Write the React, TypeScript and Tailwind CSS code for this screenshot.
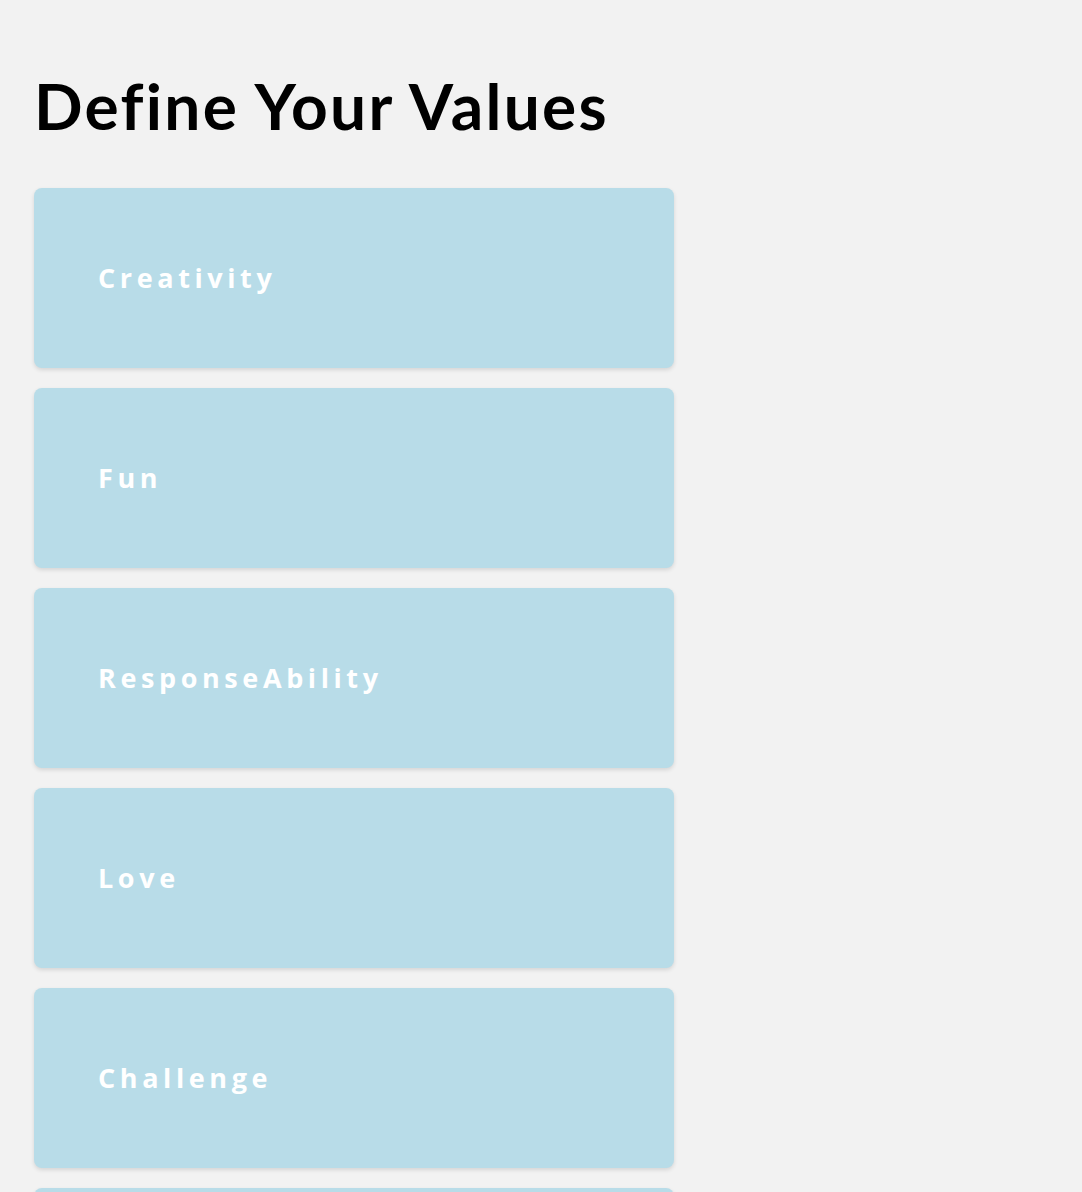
import React from 'react';

const values = ['Creativity', 'Fun', 'ResponseAbility', 'Love', 'Challenge', 'Growth'];

export default function App() {
  return (
    <div className="min-h-screen bg-[#f2f2f2] px-[34px] pt-[62px] font-['Lato','Open_Sans',sans-serif]">
      <h1 className="text-[64px] font-bold leading-[88px] text-black tracking-[2.3px]">Define Your Values</h1>
      <div className="mt-[38px] flex flex-col gap-5 w-[640px]">
        {values.map(v => (
          <div
            key={v}
            className="h-[180px] rounded-lg bg-[#b8dce8] shadow-[0_2px_4px_rgba(0,0,0,0.12)] flex items-center pl-16"
          >
            <span className="text-white text-[27px] font-bold tracking-[4.6px] font-['Open_Sans',sans-serif]">{v}</span>
          </div>
        ))}
      </div>
    </div>
  );
}
